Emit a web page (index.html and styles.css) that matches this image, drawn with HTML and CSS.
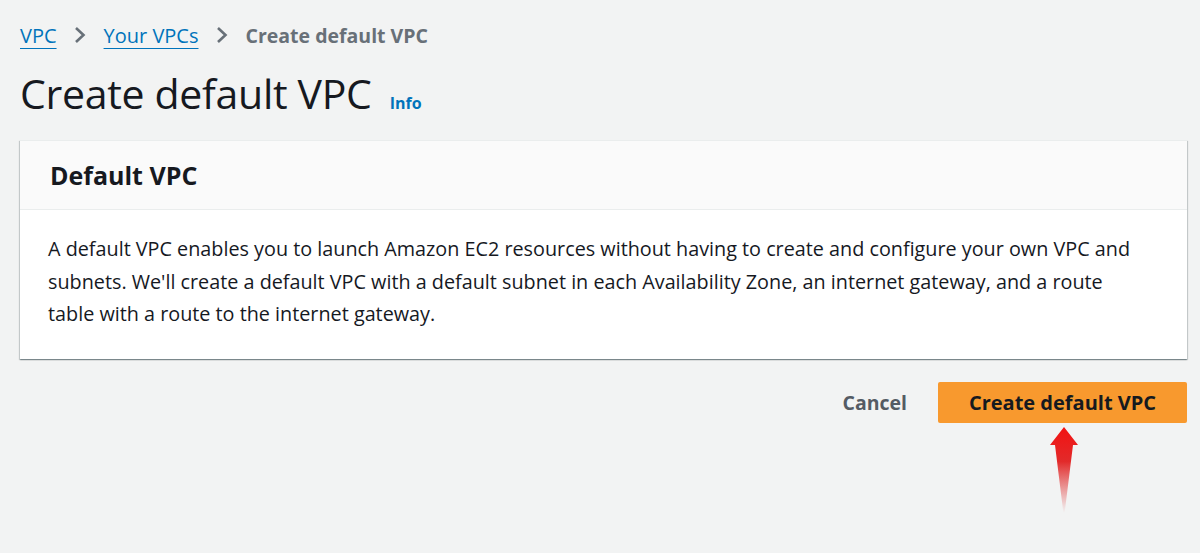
FILE: index.html
```html
<!DOCTYPE html>
<html>
<head>
<meta charset="utf-8">
<link rel="stylesheet" href="styles.css">
</head>
<body>
<div class="page">
  <nav class="crumbs">
    <a class="crumb-link" href="#">VPC</a>
    <svg class="chev" viewBox="0 0 12 18" width="12" height="18"><path d="M2 2 L9.5 9 L2 16" fill="none" stroke="#687078" stroke-width="2.6" stroke-linejoin="miter"/></svg>
    <a class="crumb-link" href="#">Your VPCs</a>
    <svg class="chev" viewBox="0 0 12 18" width="12" height="18"><path d="M2 2 L9.5 9 L2 16" fill="none" stroke="#687078" stroke-width="2.6" stroke-linejoin="miter"/></svg>
    <span class="crumb-current">Create default VPC</span>
  </nav>
  <div class="title-row">
    <h1 class="title">Create default VPC</h1>
    <a class="info" href="#">Info</a>
  </div>
  <section class="card">
    <header class="card-head">
      <h2 class="card-title">Default VPC</h2>
    </header>
    <div class="card-body">
      <p>A default VPC enables you to launch Amazon EC2 resources without having to create and configure your own VPC and subnets. We'll create a default VPC with a default subnet in each Availability Zone, an internet gateway, and a route table with a route to the internet gateway.</p>
    </div>
  </section>
  <div class="actions">
    <button class="btn-cancel">Cancel</button>
    <div class="primary-wrap">
      <button class="btn-primary">Create default VPC</button>
      <svg class="arrow" viewBox="0 0 30 90" width="30" height="90">
        <defs>
          <linearGradient id="g" x1="0" y1="0" x2="0" y2="1">
            <stop offset="0" stop-color="#f21212"/>
            <stop offset="0.4" stop-color="#e22a2a"/>
            <stop offset="1" stop-color="#e04040" stop-opacity="0"/>
          </linearGradient>
        </defs>
        <path d="M15 0 L29 18 L24 18 L15.6 86 L14.4 86 L6 18 L1 18 Z" fill="url(#g)"/>
      </svg>
    </div>
  </div>
</div>
</body>
</html>
```

FILE: styles.css
```css
* { box-sizing: border-box; }
html, body { margin: 0; padding: 0; }
body {
  background: #f2f3f3;
  font-family: "Open Sans", "Noto Sans", sans-serif;
  color: #16191f;
  width: 1200px;
  height: 553px;
  overflow: hidden;
}
.page {
  padding: 20px 13px 0 20px;
}
.crumbs {
  display: flex;
  align-items: center;
  height: 30px;
  font-size: 20px;
}
.crumb-link {
  color: #0073bb;
  text-decoration: underline;
  text-underline-offset: 5px;
  text-decoration-thickness: 1px;
}
.chev {
  margin: 0 18px 0 17px;
}
.crumb-current {
  color: #687078;
  font-weight: 700;
  font-size: 19.5px;
}
.title-row {
  display: flex;
  align-items: baseline;
  margin-top: 12px;
  height: 70px;
}
.title {
  margin: 0;
  font-size: 41px;
  font-weight: 400;
  letter-spacing: -0.3px;
  color: #16191f;
  line-height: 62px;
}
.info {
  margin-left: 18px;
  font-size: 16px;
  font-weight: 700;
  color: #0073bb;
  text-decoration: none;
}
.card {
  margin-top: 8px;
  background: #fff;
  box-shadow: 0 1px 1px 0 rgba(0,28,36,0.3), 1px 1px 1px 0 rgba(0,28,36,0.15), -1px 1px 1px 0 rgba(0,28,36,0.15);
  border-top: 1px solid #eaeded;
}
.card-head {
  background: #fafafa;
  border-bottom: 1px solid #eaeded;
  height: 69px;
  display: flex;
  align-items: center;
  padding: 0 30px;
}
.card-title {
  margin: 0;
  font-size: 25px;
  font-weight: 700;
  color: #16191f;
}
.card-body {
  padding: 23px 42px 28px 28px;
}
.card-body p {
  margin: 0;
  font-size: 19.8px;
  line-height: 32.5px;
  color: #16191f;
}
.actions {
  display: flex;
  justify-content: flex-end;
  align-items: center;
  margin-top: 23px;
}
.btn-cancel {
  background: none;
  border: none;
  font-family: inherit;
  font-size: 19.5px;
  font-weight: 700;
  color: #545b64;
  padding: 0;
  margin-right: 31px;
}
.primary-wrap {
  position: relative;
}
.btn-primary {
  display: block;
  width: 249px;
  height: 41px;
  background: #f8992e;
  border: none;
  border-radius: 2px;
  font-family: inherit;
  font-size: 20px;
  font-weight: 700;
  color: #16191f;
  padding: 0;
}
.arrow {
  position: absolute;
  left: 111px;
  top: 45px;
}
```
